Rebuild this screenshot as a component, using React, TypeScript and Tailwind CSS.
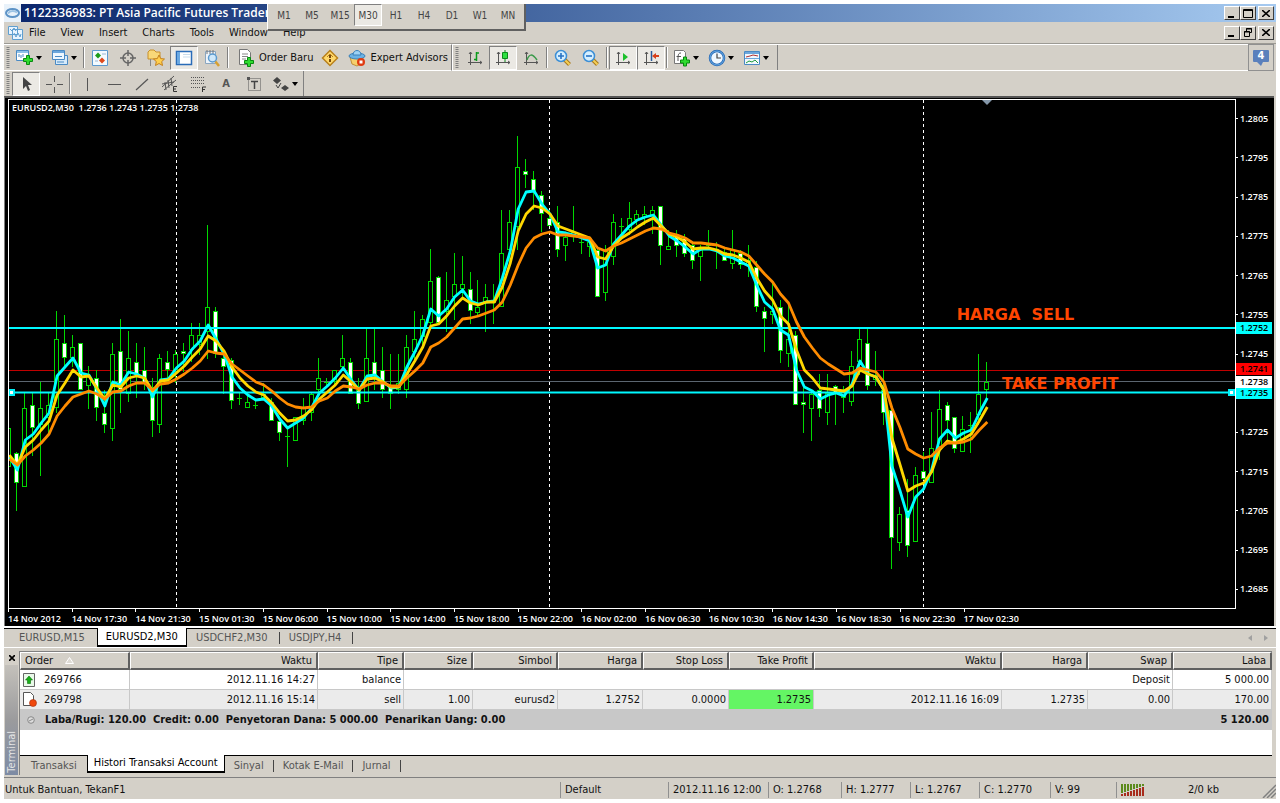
import React, { useState } from 'react';

// [high, body top, body bottom, low, filled]
type Candle = [number, number, number, number, number];

const candles: Candle[] = [
  [428, 428, 467, 467, 0], [452, 453, 483, 511, 1], [393, 408, 487, 487, 0], [393, 405, 428, 456, 1],
  [382, 408, 425, 476, 0], [393, 405, 418, 433, 0], [311, 339, 408, 413, 0], [315, 343, 358, 367, 1],
  [335, 347, 358, 367, 0], [343, 343, 390, 390, 1], [366, 376, 386, 409, 0], [370, 378, 408, 421, 1],
  [390, 413, 425, 433, 1], [343, 354, 429, 441, 0], [319, 351, 390, 413, 1], [331, 358, 394, 402, 0],
  [343, 362, 375, 398, 1], [347, 370, 383, 390, 1], [378, 387, 421, 437, 1], [354, 358, 425, 433, 0],
  [351, 362, 370, 383, 1], [350, 354, 372, 383, 0], [343, 351, 354, 372, 1], [323, 335, 350, 362, 0],
  [323, 335, 345, 355, 0], [225, 307, 332, 359, 0], [307, 311, 354, 358, 1], [354, 358, 367, 394, 1],
  [358, 360, 401, 409, 1], [393, 398, 398, 405, 0], [394, 402, 408, 408, 0], [400, 405, 405, 409, 0],
  [383, 394, 398, 400, 0], [398, 402, 421, 421, 1], [418, 421, 433, 441, 1], [426, 436, 436, 467, 0],
  [417, 417, 441, 441, 0], [398, 408, 421, 425, 0], [393, 394, 413, 421, 0], [358, 378, 390, 395, 0],
  [378, 382, 382, 387, 0], [370, 370, 382, 387, 0], [335, 358, 367, 370, 0], [358, 362, 394, 394, 1],
  [378, 390, 404, 409, 1], [328, 358, 402, 402, 0], [328, 362, 375, 390, 1], [347, 370, 390, 398, 1],
  [354, 387, 394, 409, 1], [354, 383, 390, 394, 0], [335, 347, 390, 398, 0], [311, 339, 352, 362, 0],
  [315, 319, 337, 345, 0], [249, 281, 323, 325, 0], [276, 277, 323, 325, 1], [272, 300, 312, 332, 0],
  [253, 284, 297, 320, 0], [256, 284, 289, 300, 0], [272, 289, 311, 324, 1], [280, 307, 313, 315, 0],
  [284, 297, 302, 332, 0], [284, 300, 303, 324, 0], [210, 253, 307, 307, 0], [210, 222, 250, 265, 0],
  [136, 167, 227, 250, 0], [159, 171, 175, 188, 1], [171, 179, 192, 210, 1], [191, 195, 214, 232, 1],
  [210, 218, 226, 226, 1], [206, 222, 250, 257, 1], [233, 237, 246, 261, 0], [206, 232, 235, 242, 0],
  [235, 242, 242, 254, 0], [237, 242, 247, 257, 0], [247, 250, 297, 297, 1], [245, 250, 293, 301, 0],
  [214, 222, 257, 265, 0], [218, 226, 226, 238, 0], [202, 218, 230, 235, 0], [210, 214, 220, 225, 0],
  [206, 214, 218, 225, 0], [206, 210, 216, 234, 0], [206, 206, 246, 265, 1], [230, 246, 250, 250, 0],
  [230, 235, 246, 257, 1], [234, 238, 254, 257, 1], [242, 245, 261, 269, 1], [245, 250, 257, 281, 0],
  [230, 245, 245, 250, 0], [242, 249, 249, 269, 0], [247, 252, 261, 261, 1], [230, 250, 264, 269, 0],
  [250, 253, 265, 269, 1], [245, 260, 265, 277, 0], [261, 267, 307, 312, 1], [307, 311, 319, 352, 1],
  [282, 311, 315, 324, 0], [300, 307, 351, 363, 1], [305, 339, 354, 367, 0], [331, 335, 405, 405, 1],
  [388, 402, 405, 433, 1], [392, 394, 409, 441, 0], [374, 390, 409, 417, 1], [374, 393, 413, 425, 0],
  [385, 386, 393, 425, 1], [386, 390, 398, 413, 0], [351, 366, 402, 406, 0], [328, 339, 362, 375, 0],
  [328, 343, 386, 390, 1], [351, 375, 380, 386, 0], [370, 390, 413, 425, 1], [407, 410, 538, 569, 1],
  [507, 514, 543, 551, 0], [479, 510, 546, 557, 1], [467, 475, 542, 542, 0], [452, 471, 479, 480, 1],
  [412, 448, 483, 483, 0], [390, 409, 447, 460, 0], [402, 405, 421, 440, 1], [417, 417, 449, 453, 1],
  [416, 429, 452, 452, 0], [412, 425, 425, 453, 0], [354, 394, 415, 425, 0], [362, 382, 390, 400, 0],
];

const fastLine = [
  457, 470, 440, 434, 423, 413, 376, 367, 358, 373, 375, 389, 406, 382, 385, 372, 374, 378, 397, 380,
  379, 368, 361, 349, 341, 325, 339, 354, 377, 388, 395, 400, 399, 406, 419, 428, 423, 418, 408, 393,
  386, 378, 368, 380, 390, 376, 375, 382, 388, 387, 367, 352, 335, 309, 316, 309, 297, 290, 301, 304,
  302, 301, 278, 251, 209, 192, 191, 204, 214, 232, 233, 235, 238, 241, 268, 265, 244, 235, 226, 220,
  217, 215, 225, 236, 241, 247, 254, 249, 249, 251, 256, 258, 262, 266, 285, 302, 309, 330, 335, 370,
  387, 391, 399, 395, 393, 396, 384, 361, 374, 377, 390, 466, 490, 517, 497, 489, 470, 439, 430, 438,
  433, 430, 413, 398,
];

const midLine = [
  455, 465, 447, 440, 430, 421, 395, 383, 370, 377, 376, 388, 399, 385, 387, 378, 376, 378, 391, 381,
  380, 373, 366, 357, 349, 336, 341, 351, 367, 378, 386, 392, 395, 403, 413, 421, 420, 416, 410, 399,
  392, 385, 375, 382, 390, 379, 378, 382, 387, 387, 374, 361, 347, 326, 324, 316, 306, 298, 303, 305,
  302, 302, 287, 263, 231, 214, 206, 208, 214, 226, 229, 232, 235, 238, 257, 259, 246, 238, 233, 227,
  222, 218, 226, 234, 237, 242, 249, 248, 248, 250, 254, 255, 258, 262, 278, 291, 300, 316, 324, 350,
  370, 378, 388, 389, 390, 391, 386, 370, 374, 377, 390, 438, 464, 491, 486, 483, 472, 450, 441, 443,
  439, 434, 421, 407,
];

const slowLine = [
  459, 465, 456, 450, 443, 434, 416, 406, 397, 394, 391, 394, 399, 392, 391, 386, 383, 383, 390, 384,
  383, 379, 374, 368, 361, 351, 353, 354, 364, 370, 376, 382, 385, 391, 398, 404, 407, 408, 407, 401,
  398, 391, 386, 387, 389, 385, 383, 383, 386, 386, 378, 371, 363, 347, 343, 337, 328, 319, 318, 316,
  313, 310, 302, 285, 265, 248, 238, 234, 232, 235, 235, 236, 237, 238, 248, 251, 246, 243, 239, 235,
  231, 228, 229, 233, 235, 238, 243, 243, 244, 245, 248, 250, 252, 256, 265, 274, 282, 294, 303, 322,
  337, 348, 358, 364, 369, 374, 373, 368, 370, 372, 382, 408, 427, 449, 454, 458, 456, 448, 443, 443,
  442, 439, 430, 422,
];

const barX = (i: number) => 9.4 + i * 7.95;
const toPoints = (values: number[]) => values.map((y, i) => `${barX(i).toFixed(1)},${y}`).join(' ');

const menus = ['File', 'View', 'Insert', 'Charts', 'Tools', 'Window', 'Help'];
const timeframes = ['M1', 'M5', 'M15', 'M30', 'H1', 'H4', 'D1', 'W1', 'MN'];
const prices = [
  '1.2805', '1.2795', '1.2785', '1.2775', '1.2765', '1.2755', '1.2745', '', '1.2725', '1.2715', '1.2705', '1.2695', '1.2685',
];
const times = [
  '14 Nov 2012', '14 Nov 17:30', '14 Nov 21:30', '15 Nov 01:30', '15 Nov 06:00', '15 Nov 10:00', '15 Nov 14:00', '15 Nov 18:00',
  '15 Nov 22:00', '16 Nov 02:00', '16 Nov 06:30', '16 Nov 10:30', '16 Nov 14:30', '16 Nov 18:30', '16 Nov 22:30', '17 Nov 02:30',
];
const chartTabs = ['EURUSD,M15', 'EURUSD2,M30', 'USDCHF2,M30', 'USDJPY,H4'];
const terminalTabs = ['Transaksi', 'Histori Transaksi Account', 'Sinyal', 'Kotak E-Mail', 'Jurnal'];

const columns = [
  { name: 'Order', width: 'w-[110px]' },
  { name: 'Waktu', width: 'w-[188px]' },
  { name: 'Tipe', width: 'w-[86px]' },
  { name: 'Size', width: 'w-[69px]' },
  { name: 'Simbol', width: 'w-[85px]' },
  { name: 'Harga', width: 'w-[85px]' },
  { name: 'Stop Loss', width: 'w-[86px]' },
  { name: 'Take Profit', width: 'w-[85px]' },
  { name: 'Waktu', width: 'w-[188px]' },
  { name: 'Harga', width: 'w-[86px]' },
  { name: 'Swap', width: 'w-[85px]' },
  { name: 'Laba', width: 'w-[99px]' },
];

const sellRow = ['2012.11.16 15:14', 'sell', '1.00', 'eurusd2', '1.2752', '0.0000', '1.2735', '2012.11.16 16:09', '1.2735', '0.00', '170.00'];

/* ---------- small pieces ---------- */

const Caret = () => (
  <svg width="6" height="4" viewBox="0 0 6 4" className="shrink-0">
    <path d="M0 0h6L3 4z" fill="#000" />
  </svg>
);

const Separator = () => (
  <span className="flex w-1 shrink-0 justify-center self-stretch py-[2px]">
    <span className="w-[2px] border-r border-l border-r-white border-l-[#808080]" />
  </span>
);

const Grip = () => (
  <span className="flex w-2 shrink-0 justify-center self-stretch py-[2px]">
    <svg width="4" height="21" viewBox="0 0 4 21">
      <path d="M2 0v21" stroke="#808080" strokeWidth="3" strokeDasharray="1 1" />
    </svg>
  </span>
);

interface ToolProps {
  label: string;
  pressed?: boolean;
  menu?: boolean;
  children: React.ReactNode;
}

const Tool = ({ label, pressed, menu, children }: ToolProps) => {
  if (menu) {
    return (
      <button aria-label={label} className="flex h-6 w-[35px] shrink-0 items-center gap-[2px] pl-1">
        {children}
        <Caret />
      </button>
    );
  }
  return (
    <button
      aria-label={label}
      className={`flex h-6 w-7 shrink-0 items-center justify-center border ${
        pressed ? 'border-t-[#808080] border-r-white border-b-white border-l-[#808080] bg-[#ebe9e4]' : 'border-transparent'
      }`}
    >
      {children}
    </button>
  );
};

const Icon = ({ children }: { children: React.ReactNode }) => (
  <svg width="18" height="18" viewBox="0 0 18 18" fill="none" className="shrink-0">
    {children}
  </svg>
);

const Plus = ({ x, y }: { x: number; y: number }) => (
  <path
    transform={`translate(${x} ${y})`}
    d="M3.5 .5h3v3h3v3h-3v3h-3v-3h-3v-3h3z"
    fill="#2fdc2f"
    stroke="#078a10"
  />
);

const Axes = () => (
  <g stroke="#555" strokeWidth="1">
    <path d="M4.5 3v13M2 13.5h14" />
    <path d="M3 5l1.500-2L6 5M14 12l2 1.500-2 1.500" />
  </g>
);

const Lens = ({ sign }: { sign: string }) => (
  <Icon>
    <path d="M10.500 10.500l5 5" stroke="#a9791a" strokeWidth="4" />
    <path d="M10.500 10.500l5 5" stroke="#f5cf57" strokeWidth="2" />
    <circle cx="7" cy="7" r="5.500" fill="#d5efff" stroke="#3c8fd6" strokeWidth="1.500" />
    <path d={sign} stroke="#2873c4" strokeWidth="1.600" />
  </Icon>
);

const WindowButtons = ({ restore }: { restore?: boolean }) => {
  const shape = 'flex h-[14px] w-4 items-center justify-center border border-t-white border-r-[#404040] border-b-[#404040] border-l-white bg-[#d4d0c8]';
  return (
    <div className="flex">
      <button aria-label="Minimize" className={shape}>
        <svg width="10" height="9" viewBox="0 0 10 9"><path d="M1 7h6v2H1z" /></svg>
      </button>
      <button aria-label={restore ? 'Restore' : 'Maximize'} className={shape}>
        {restore ? (
          <svg width="10" height="9" viewBox="0 0 10 9" fill="none" stroke="#000">
            <path d="M3.500 3V.5h5v4H6.500M3 1h6M1.500 3.500h5v5h-5zM1 4h6" />
          </svg>
        ) : (
          <svg width="10" height="9" viewBox="0 0 10 9" fill="none" stroke="#000">
            <path d="M.5.5h9v8h-9zM0 1.500h10" />
          </svg>
        )}
      </button>
      <button aria-label="Close" className={`${shape} ml-[2px]`}>
        <svg width="8" height="7" viewBox="0 0 8 7"><path d="M0 0l8 7M8 0L0 7" stroke="#000" strokeWidth="1.600" /></svg>
      </button>
    </div>
  );
};

/* ---------- header ---------- */

const Header = () => {
  const [frame, setFrame] = useState('M30');

  return (
    <header className="relative">
      <div className="flex h-[18px] items-center justify-between bg-gradient-to-r from-[#0a246a] to-[#a6caf0] pr-[2px]">
        <div className="flex items-center gap-[3px]">
          <svg width="17" height="18" viewBox="0 0 17 18">
            <path d="M0 0h17v18H0z" fill="#e9f2fa" />
            <ellipse cx="8.500" cy="9" rx="6.500" ry="4" fill="none" stroke="#5d93c6" strokeWidth="2" />
            <path d="M4 9.500c2-3 6-3 9-1" fill="none" stroke="#9cc3e4" strokeWidth="2" />
          </svg>
          <h1 className="text-[12px] leading-[18px] font-semibold whitespace-nowrap text-white [font-family:'Open_Sans','Noto_Sans',sans-serif]">
            1122336983: PT Asia Pacific Futures Trader
          </h1>
        </div>
        <WindowButtons />
      </div>

      <div className="flex h-[21px] items-center justify-between pr-[2px] pl-1">
        <nav className="flex items-center">
          <svg width="16" height="14" viewBox="0 0 16 14" fill="#e8f4ff" stroke="#5f9fd0">
            <path d="M.5 .5h9v8h-9zM4.500 3.500h10v10h-10z" />
            <path d="M2 3l2 2 2-3 2 3M6 7l2 4 2-4 2 4 1-3" fill="none" />
          </svg>
          <ul className="flex gap-[15px] pl-[5px]">
            {menus.map((menu) => (
              <li key={menu}>
                <button>{menu}</button>
              </li>
            ))}
          </ul>
        </nav>
        <WindowButtons restore />
      </div>

      {/* floating period palette */}
      <div className="absolute top-0 left-[263px] flex h-[27px] w-[259px] border-r-2 border-b-2 border-l border-r-[#606060] border-b-[#606060] border-l-white bg-[#d4d0c8] pl-[2px]">
        {timeframes.map((item) => (
          <button
            key={item}
            onClick={() => setFrame(item)}
            className={`h-[22px] w-7 border pt-px text-[10px] text-[#444] ${
              frame === item ? 'border-t-[#808080] border-r-white border-b-white border-l-[#808080] bg-[#ebe9e4]' : 'border-transparent'
            }`}
          >
            {item}
          </button>
        ))}
      </div>
    </header>
  );
};

/* ---------- toolbars ---------- */

const MainToolbar = () => (
  <div className="flex justify-between border-t border-[#9c9a94]">
    <div className="flex items-center border-t border-r border-b border-t-white border-r-[#808080] border-b-white">
      <Grip />
      <Tool label="New chart" menu>
        <Icon>
          <path d="M.5 1.500h12v10H.5z" fill="#fff" stroke="#4a8ac4" />
          <path d="M1 2h11v2H1z" fill="#8fc1e8" />
          <path d="M3 8V5M5 9V6M7 8V5" stroke="#4a8ac4" />
          <Plus x={7} y={6} />
        </Icon>
      </Tool>
      <Tool label="Profiles" menu>
        <Icon>
          <path d="M4.500 6.500h12v9h-12z" fill="#d6eafa" stroke="#4a8ac4" />
          <path d="M1.500 1.500h12v9h-12z" fill="#eef7ff" stroke="#4a8ac4" />
          <path d="M2 2h11v2H2z" fill="#6ba6dc" />
          <path d="M4 7.500h7M6 13h7" stroke="#4a8ac4" />
        </Icon>
      </Tool>
      <Separator />
      <Tool label="Market watch">
        <Icon>
          <path d="M1.500 1.500h15v15h-15z" fill="#f3faff" stroke="#5c9ad0" />
          <path d="M4 6.500L7 3.500l3 3-3 3z" fill="#1c9c1c" />
          <path d="M8 11.500l3-3 3 3-3 3z" fill="#e04a1c" />
          <path d="M11 5h4M4 12h3" stroke="#9ab8d4" />
        </Icon>
      </Tool>
      <Tool label="Data window">
        <Icon>
          <circle cx="9" cy="9" r="5" stroke="#666" strokeWidth="1.500" />
          <path d="M9 1v6M9 11v6M1 9h6M11 9h6" stroke="#666" strokeWidth="1.500" />
        </Icon>
      </Tool>
      <Tool label="Favorites">
        <Icon>
          <path d="M1 3l2-2h4l2 2h4v7H1z" fill="#f8d878" stroke="#c8902c" />
          <path d="M3.500 10v7" stroke="#888" />
          <path d="M12 6l1.700 3.600 3.800.4-2.800 2.600.8 3.900-3.500-2-3.500 2 .8-3.900L6.500 10l3.800-.4z" fill="#ffcf4d" stroke="#c4801c" />
        </Icon>
      </Tool>
      <Tool label="Navigator" pressed>
        <Icon>
          <path d="M1.500 2.500h15v13h-15z" fill="#fff" stroke="#2a6cb8" strokeWidth="1.500" />
          <path d="M2 3h3v12H2z" fill="#6ba9e2" />
          <path d="M8 5.500h7M8 8h7" stroke="#c9dcec" />
        </Icon>
      </Tool>
      <Tool label="Strategy tester">
        <Icon>
          <path d="M2.500 2.500h10v12h-10z" fill="#eef4fa" stroke="#8aa6c0" />
          <path d="M4 1v4M7 1v4M10 1v4" stroke="#777" />
          <path d="M12 12l4 5" stroke="#d8a030" strokeWidth="2.500" />
          <circle cx="9.500" cy="9" r="4" fill="#cfe8fa" stroke="#5a9ad0" strokeWidth="1.500" />
        </Icon>
      </Tool>
      <Separator />
      <button className="flex h-6 items-center gap-1 pr-[3px] pl-[7px]">
        <Icon>
          <path d="M2.500 .5h8l3 3v12h-11z" fill="#fff" stroke="#777" />
          <path d="M5 5h6M5 7.500h6M5 10h4" stroke="#888" />
          <Plus x={7} y={8} />
        </Icon>
        Order Baru
      </button>
      <Tool label="Meta editor">
        <Icon>
          <path d="M9 1.500L16.500 9 9 16.500 1.500 9z" fill="#ffd86a" stroke="#b8801c" strokeWidth="1.500" />
          <path d="M9 5v4M9 10v3" stroke="#7a4a10" strokeWidth="2" />
          <path d="M6 8l3-3 3 3" stroke="#b8801c" />
        </Icon>
      </Tool>
      <button className="flex h-6 items-center gap-1 pr-[3px] pl-1">
        <Icon>
          <path d="M2 8h13l-1 6-5 3-5-2z" fill="#f6cf6a" stroke="#c0903a" />
          <ellipse cx="9" cy="7" rx="8" ry="3" fill="#6ab2e4" stroke="#3a80ba" />
          <path d="M5 6c0-6 8-6 8 0z" fill="#9ed2f4" stroke="#3a80ba" />
          <circle cx="13" cy="13" r="4" fill="#e03a10" />
          <path d="M11.500 11.500h3v3h-3z" fill="#fff" />
        </Icon>
        Expert Advisors
      </button>
    </div>

    <div className="flex flex-1 items-center border-t border-b border-l border-t-white border-b-white border-l-white">
      <Grip />
      <Tool label="Bar chart">
        <Icon>
          <Axes />
          <path d="M10.500 3v9M10.500 4H13M8 10.500h2.500" stroke="#0a9a1a" strokeWidth="1.500" />
        </Icon>
      </Tool>
      <Tool label="Candlesticks" pressed>
        <Icon>
          <Axes />
          <path d="M11 1v12" stroke="#0a8a1a" />
          <path d="M8.500 3.500h5v6h-5z" fill="#2ee040" stroke="#0a8a1a" />
        </Icon>
      </Tool>
      <Tool label="Line chart">
        <Icon>
          <Axes />
          <path d="M5 11c2-6 5-7 10 0" stroke="#3a9a4a" strokeWidth="1.500" />
        </Icon>
      </Tool>
      <Separator />
      <Tool label="Zoom in"><Lens sign="M7 4v6M4 7h6" /></Tool>
      <Tool label="Zoom out"><Lens sign="M4 7h6" /></Tool>
      <Separator />
      <Tool label="Auto scroll" pressed>
        <Icon>
          <Axes />
          <path d="M9 4l5 4-5 4z" fill="#1cc02c" />
        </Icon>
      </Tool>
      <Tool label="Chart shift" pressed>
        <Icon>
          <Axes />
          <path d="M9.500 2v10" stroke="#2a5a9a" strokeWidth="1.500" />
          <path d="M10 7l4-3v2h3v2h-3v2z" fill="#d8401c" />
        </Icon>
      </Tool>
      <Separator />
      <Tool label="Indicators" menu>
        <Icon>
          <path d="M1.500 1.500h9l2 2v11h-11z" fill="#fff" stroke="#777" />
          <path d="M8 4c-3 0-3 2-3 8M3.500 7.500H8" stroke="#555" />
          <Plus x={7} y={7.500} />
        </Icon>
      </Tool>
      <Tool label="Periods" menu>
        <Icon>
          <circle cx="9" cy="9" r="7" fill="#f0f8ff" stroke="#2466b4" strokeWidth="2.500" />
          <circle cx="9" cy="9" r="7" stroke="#6aaee6" strokeWidth="1" />
          <path d="M9 4.500V9h4" stroke="#444" strokeWidth="1.200" />
        </Icon>
      </Tool>
      <Tool label="Templates" menu>
        <Icon>
          <path d="M1.500 2.500h15v13h-15z" fill="#f2f8fe" stroke="#4a8ac4" />
          <path d="M2 3h14v2H2zM2 9h14v1H2z" fill="#6ba6dc" />
          <path d="M3 8l4-1 3-1 5 1" stroke="#b03030" />
          <path d="M3 14l3-2 3 1 3-2 3 3" stroke="#1c9c3c" />
        </Icon>
      </Tool>
      <span className="ml-[3px] self-stretch border-l border-[#808080]" />
    </div>

    <button aria-label="4 messages" className="mr-[2px] flex w-[26px] items-center justify-center self-stretch border border-[#909090]">
      <span className="relative mb-1 flex h-3 w-4 items-center justify-center rounded-[1px] bg-[#5a80bc] text-[11px] font-bold text-white">
        4
        <svg width="6" height="4" viewBox="0 0 6 4" className="absolute top-full left-1"><path d="M0 0h6L4 4z" fill="#5a80bc" /></svg>
      </span>
    </button>
  </div>
);

const DrawToolbar = () => (
  <div className="flex">
    <div className="flex h-[25px] items-center border-r border-[#808080]">
      <Grip />
      <Tool label="Cursor" pressed>
        <Icon><path d="M6 2v12l3-3 2 5 2-1-2-5h4z" fill="#444" /></Icon>
      </Tool>
      <Tool label="Crosshair">
        <Icon><path d="M9.500 1v6M9.500 12v6M1 9.500h6M12 9.500h6" stroke="#555" /></Icon>
      </Tool>
      <Separator />
      <Tool label="Vertical line"><Icon><path d="M10.500 3v13" stroke="#555" /></Icon></Tool>
      <Tool label="Horizontal line"><Icon><path d="M3 9.500h13" stroke="#555" /></Icon></Tool>
      <Tool label="Trendline"><Icon><path d="M3 15L15 4" stroke="#555" strokeWidth="1.200" /></Icon></Tool>
      <Tool label="Equidistant channel">
        <Icon>
          <path d="M1 12L13 1M3 15L15 5M4 7l1 8M7 5l1 8M10 3l1 8M1 9l12-2" stroke="#555" />
          <path d="M16 11.500h-3.500v5H16M12.500 14H15" stroke="#333" />
        </Icon>
      </Tool>
      <Tool label="Fibonacci retracement">
        <Icon>
          <path d="M2 2.500h14M2 5.500h14M2 8.500h14M2 12.500h9" stroke="#555" strokeDasharray="1 1" />
          <path d="M13.500 17v-5H17M13.500 14.500H16" stroke="#333" />
        </Icon>
      </Tool>
      <Tool label="Text"><span className="font-bold text-[#555]">A</span></Tool>
      <Tool label="Text label">
        <Icon>
          <path d="M3.500 3.500h12v12h-12z" stroke="#555" strokeDasharray="1 1" />
          <path d="M6 6.500h7M9.500 6v8" stroke="#444" strokeWidth="1.500" />
          <path d="M2 2h3v3H2z" fill="#555" />
        </Icon>
      </Tool>
      <Tool label="Arrows" menu>
        <Icon>
          <path d="M5 2l4 3.500L5 9 1 5.500zM13 10l4 3-4 3-4-3z" fill="#444" />
          <path d="M4 10l2 3 3-5" stroke="#444" />
        </Icon>
      </Tool>
    </div>
  </div>
);

/* ---------- chart ---------- */

const PriceTag = ({ className, value }: { className: string; value: string }) => (
  <span className={`absolute right-0 left-0 flex h-3 -translate-y-1/2 items-center pl-1 ${className}`}>{value}</span>
);

const Chart = () => (
  <main className="mr-[2px] flex min-h-60 flex-1 flex-col border-t-2 border-l border-t-[#555] border-l-[#808080] bg-black pt-px pl-[3px] text-[9px] font-semibold text-white [font-family:'Open_Sans','Noto_Sans',sans-serif]">
    <div className="flex min-h-0 flex-1">
      <div className="relative min-w-0 flex-1 border border-white">
        <svg viewBox="9 100 1226 508" preserveAspectRatio="none" className="absolute inset-0 h-full w-full">
          {[176.5, 549.5, 923.5].map((x) => (
            <path key={x} d={`M${x} 100v508`} stroke="#fff" strokeDasharray="3 3" />
          ))}
          <path d="M9 370.500h1226" stroke="#c00000" />
          <path d="M9 381.500h1226" stroke="#5c6670" />
          <g stroke="#00d800" shapeRendering="crispEdges">
            {candles.map(([high, top, bottom, low, filled], i) => {
              const x = Math.round(barX(i)) - 0.5;
              return (
                <g key={i}>
                  <path d={`M${x} ${high}V${top}M${x} ${bottom}V${low}`} />
                  {top === bottom ? (
                    <path d={`M${x - 2.5} ${top + 0.5}h5`} />
                  ) : (
                    <rect x={x - 2} y={top + 0.5} width="4" height={bottom - top - 1} fill={filled ? '#fff' : '#000'} />
                  )}
                </g>
              );
            })}
          </g>
          <path d="M9 328h1226M9 392.500h1226" stroke="#00f8ff" strokeWidth="2" />
          <path d="M9 390h5v5H9zM1229 390h5v5h-5z" fill="#fff" stroke="#00f0f8" strokeWidth="2" />
          <g fill="none" strokeWidth="2.800" strokeLinejoin="round">
            <polyline points={toPoints(fastLine)} stroke="#00ffff" />
            <polyline points={toPoints(midLine)} stroke="#ffd700" />
            <polyline points={toPoints(slowLine)} stroke="#ff8c00" />
          </g>
          <path d="M982 100h10l-5 5z" fill="#8496a8" />
        </svg>
        <p className="absolute top-px left-[3px] whitespace-pre">EURUSD2,M30  1.2736 1.2743 1.2735 1.2738</p>
        <p className="absolute top-[42.300%] left-[77.300%] -translate-y-1/2 text-[16px] leading-none font-bold whitespace-pre text-[#ff4500] [font-family:'DejaVu_Sans',sans-serif]">
          HARGA  SELL
        </p>
        <p className="absolute top-[55.900%] left-[81%] -translate-y-1/2 text-[16px] leading-none font-bold whitespace-pre text-[#ff4500] [font-family:'DejaVu_Sans',sans-serif]">
          TAKE PROFIT
        </p>
      </div>

      <div className="relative mr-[2px] flex w-9 flex-col">
        {prices.map((price, i) => (
          <span key={i} className="flex min-h-0 flex-1 items-center gap-[2px]">
            <span className="h-px w-[2px] bg-white" />
            {price}
          </span>
        ))}
        <PriceTag value="1.2752" className="top-[44.900%] bg-[#00ffff] text-black" />
        <PriceTag value="1.2741" className="top-[53%] bg-[#ff0000] text-black" />
        <PriceTag value="1.2735" className="top-[57.700%] bg-[#00ffff] text-black" />
        <PriceTag value="1.2738" className="top-[55.400%] bg-white text-black" />
      </div>
    </div>

    <div className="mr-[38px] h-[17px]">
      <div className="grid w-[83%] grid-cols-16">
        {times.map((time) => (
          <span key={time} className="min-w-0 leading-[14px] whitespace-nowrap">
            <span className="block h-[3px] w-px bg-white" />
            {time}
          </span>
        ))}
      </div>
    </div>
  </main>
);

/* ---------- tabs under the chart ---------- */

const ChartTabs = () => {
  const [active, setActive] = useState(1);

  return (
    <div className="flex h-[22px] justify-between border-t-2 border-b border-white bg-[#d4d0c8]">
      <div className="flex flex-1 border-t border-black pl-[6px]">
        {chartTabs.map((tab, i) => (
          <button
            key={tab}
            onClick={() => setActive(i)}
            className={
              active === i
                ? '-mt-px h-[19px] border-r border-b-2 border-l border-black bg-white px-2 text-black'
                : 'flex h-[18px] items-center pl-[9px] text-[#555]'
            }
          >
            {tab}
            {active !== i && <span className={`ml-[11px] h-3 w-px ${i > active ? 'bg-[#444]' : 'bg-transparent'}`} />}
          </button>
        ))}
      </div>
      <div className="flex items-center gap-3 border-t border-black pr-2">
        <button aria-label="Scroll left"><svg width="4" height="6" viewBox="0 0 4 6"><path d="M4 0v6L0 3z" fill="#a0a0a0" /></svg></button>
        <button aria-label="Scroll right"><svg width="4" height="6" viewBox="0 0 4 6"><path d="M0 0v6l4-3z" fill="#a0a0a0" /></svg></button>
      </div>
    </div>
  );
};

/* ---------- terminal ---------- */

const cell = 'h-5 border-r border-b border-[#c8c8c8] pr-[2px] text-right';

const HistoryTable = () => (
  <table className="w-full table-fixed border-separate border-spacing-0">
    <thead>
      <tr className="h-[18px]">
        {columns.map((column, i) => (
          <th
            key={i}
            scope="col"
            className={`border-t border-r-2 border-b-2 border-l border-t-white border-r-[#606060] border-b-[#606060] border-l-white bg-[#d4d0c8] pt-px pb-0 font-normal ${
              column.width
            } ${i === 0 ? 'pl-1 text-left' : 'pr-1 text-right'}`}
          >
            {column.name}
            {i === 0 && (
              <svg width="9" height="7" viewBox="0 0 9 7" fill="none" className="ml-3 inline-block align-baseline">
                <path d="M.5 6.500h8L4.500.5z" fill="#dedbd5" stroke="#fff" />
              </svg>
            )}
          </th>
        ))}
      </tr>
    </thead>
    <tbody>
      <tr>
        <td className={cell}>
          <span className="flex items-center gap-[9px] pl-[3px]">
            <svg width="12" height="14" viewBox="0 0 12 14">
              <path d="M.5.5h11v13H.5z" fill="#eafaea" stroke="#666" />
              <path d="M6 3L9.500 7H7.500v3.500h-3V7h-2z" fill="#18b018" stroke="#087008" strokeWidth=".6" />
            </svg>
            269766
          </span>
        </td>
        <td className={cell}>2012.11.16 14:27</td>
        <td className={cell}>balance</td>
        <td className={cell} colSpan={8}>Deposit</td>
        <td className={cell}>5 000.00</td>
      </tr>
      <tr className="bg-[#ebebeb]">
        <td className={cell}>
          <span className="flex items-center gap-[7px] pl-[3px]">
            <svg width="14" height="15" viewBox="0 0 14 15">
              <path d="M.5.5h7l3 3v10H.5z" fill="#fff" stroke="#555" />
              <circle cx="10" cy="11" r="3.500" fill="#f0480c" stroke="#a03010" strokeWidth=".6" />
            </svg>
            269798
          </span>
        </td>
        {sellRow.map((value, i) => (
          <td key={i} className={`${cell} ${i === 6 ? 'bg-[#64f564]' : ''}`}>
            {value}
          </td>
        ))}
      </tr>
      <tr className="bg-[#c8c8c8] font-bold">
        <td colSpan={11} className="h-5">
          <span className="flex items-center gap-[10px] pl-[7px] whitespace-pre">
            <svg width="8" height="8" viewBox="0 0 8 8" fill="#ddd" stroke="#888">
              <circle cx="4" cy="4" r="3.300" />
              <path d="M2 5l4-2" />
            </svg>
            Laba/Rugi: 120.00  Credit: 0.00  Penyetoran Dana: 5 000.00  Penarikan Uang: 0.00
          </span>
        </td>
        <td className="pr-[3px] text-right">5 120.00</td>
      </tr>
    </tbody>
  </table>
);

const Terminal = () => {
  const [active, setActive] = useState(1);

  return (
    <section className="mt-[3px] flex h-[124px]">
      <div className="flex w-[15px] shrink-0 flex-col items-center">
        <button aria-label="Close terminal" className="flex h-[14px] items-center">
          <svg width="6" height="6" viewBox="0 0 6 6"><path d="M0 0l6 6M6 0L0 6" stroke="#000" strokeWidth="1.600" /></svg>
        </button>
        <div className="flex w-[13px] flex-1 items-end justify-center bg-gradient-to-b from-[#c4c1bb] via-[#9b9b9d] to-[#7d8ba4] pb-[2px]">
          <h2 className="rotate-180 leading-[13px] text-[#e4e4e4] [writing-mode:vertical-rl]">Terminal</h2>
        </div>
      </div>
      <div className="mr-1 flex min-w-0 flex-1 flex-col border-t border-l border-[#808080]">
        <div className="flex-1 bg-white">
          <HistoryTable />
        </div>
        <div className="flex h-5 border-t border-black pl-[2px]">
          {terminalTabs.map((tab, i) => (
            <button
              key={tab}
              onClick={() => setActive(i)}
              className={
                active === i
                  ? '-mt-px h-[18px] border-r border-b-2 border-l border-black bg-white px-[6px] text-black'
                  : 'flex h-[19px] items-center pl-[9px] text-[#555]'
              }
            >
              {tab}
              {active !== i && <span className={`ml-[9px] h-3 w-px ${i > active ? 'bg-[#444]' : 'bg-transparent'}`} />}
            </button>
          ))}
        </div>
      </div>
    </section>
  );
};

/* ---------- status bar ---------- */

const statusCells = [
  { text: 'Default', width: 'w-[108px]' },
  { text: '2012.11.16 12:00', width: 'w-[100px]' },
  { text: 'O: 1.2768', width: 'w-[73px]' },
  { text: 'H: 1.2777', width: 'w-[69px]' },
  { text: 'L: 1.2767', width: 'w-[69px]' },
  { text: 'C: 1.2770', width: 'w-[71px]' },
  { text: 'V: 99', width: 'w-[66px]' },
];

const StatusBar = () => (
  <footer className="mt-[2px] flex h-[22px] border-t border-[#808080] pt-1 pb-px">
    <p className="flex flex-1 items-center pl-px">Untuk Bantuan, TekanF1</p>
    {statusCells.map((item) => (
      <p key={item.text} className={`flex shrink-0 items-center border-l border-[#909090] pl-1 whitespace-nowrap ${item.width}`}>
        {item.text}
      </p>
    ))}
    <div className="flex w-[160px] shrink-0 items-center border-l border-[#909090] pl-1">
      <svg width="24" height="12" viewBox="0 0 24 12">
        {[0, 1, 2, 3, 4, 5, 6, 7].map((i) => (
          <g key={i}>
            <path d={`M${i * 3} 0h2v${9 - i}h-2z`} fill="#5c8a1c" />
            <path d={`M${i * 3} ${10 - i}h2V12h-2z`} fill="#a82c1c" />
          </g>
        ))}
      </svg>
      <span className="flex-1 text-center">2/0 kb</span>
      <svg width="14" height="14" viewBox="0 0 14 14" className="self-end">
        <path d="M1 14L14 1M5 14l9-9M9 14l5-5" stroke="#808080" strokeWidth="1.500" />
      </svg>
    </div>
  </footer>
);

const App = () => (
  <div className="flex min-h-screen flex-col bg-white p-1 text-[11px] leading-[14px] text-[#111] [font-family:'DejaVu_Sans_Condensed','DejaVu_Sans',sans-serif]">
    <div className="flex flex-1 flex-col bg-[#d4d0c8]">
      <Header />
      <MainToolbar />
      <DrawToolbar />
      <Chart />
      <ChartTabs />
      <Terminal />
      <StatusBar />
    </div>
  </div>
);

export default App;
